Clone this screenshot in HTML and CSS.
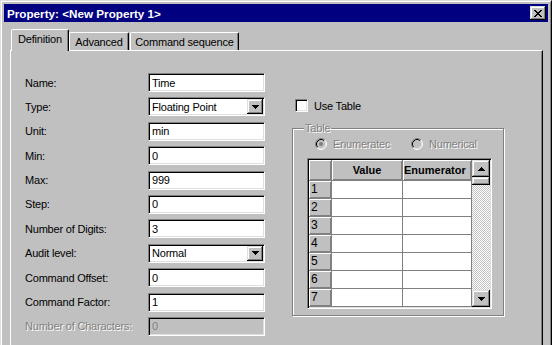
FILE: index.html
```html
<!DOCTYPE html>
<html lang="en">
<head>
    <meta charset="UTF-8">
    <title>Property: &lt;New Property 1&gt;</title>
    <link rel="stylesheet" href="styles.css">
</head>
<body>

<div class="window">
  <div class="frame">
    <div class="titlebar">
      <span class="title">Property: &lt;New Property 1&gt;</span>
      <span class="close-btn">
        <svg width="8" height="7" viewBox="0 0 8 7"><path d="M0 0h2v1H0zM6 0h2v1H6zM1 1h2v1H1zM5 1h2v1H5zM2 2h4v1H2zM3 3h2v1H3zM2 4h4v1H2zM1 5h2v1H1zM5 5h2v1H5zM0 6h2v1H0zM6 6h2v1H6z" fill="#000"/></svg>
      </span>
    </div>

    <div class="dialog-body">
      <div class="tabs">
        <div class="tab tab-def active">Definition</div>
        <div class="tab tab-adv">Advanced</div>
        <div class="tab tab-cmd">Command sequence</div>
      </div>

      <div class="panel">
        <div class="fields">
          <div class="field"><span class="field-label">Name:</span><div class="edit">Time</div></div>
          <div class="field"><span class="field-label">Type:</span>
            <div class="edit combo">Floating Point
              <span class="drop-btn"><svg width="7" height="4" viewBox="0 0 7 4"><path d="M0 0h7v1H0zM1 1h5v1H1zM2 2h3v1H2zM3 3h1v1H3z" fill="#000"/></svg></span>
            </div>
          </div>
          <div class="field"><span class="field-label">Unit:</span><div class="edit">min</div></div>
          <div class="field"><span class="field-label">Min:</span><div class="edit">0</div></div>
          <div class="field"><span class="field-label">Max:</span><div class="edit">999</div></div>
          <div class="field"><span class="field-label">Step:</span><div class="edit">0</div></div>
          <div class="field"><span class="field-label">Number of Digits:</span><div class="edit">3</div></div>
          <div class="field"><span class="field-label">Audit level:</span>
            <div class="edit combo">Normal
              <span class="drop-btn"><svg width="7" height="4" viewBox="0 0 7 4"><path d="M0 0h7v1H0zM1 1h5v1H1zM2 2h3v1H2zM3 3h1v1H3z" fill="#000"/></svg></span>
            </div>
          </div>
          <div class="field"><span class="field-label">Command Offset:</span><div class="edit">0</div></div>
          <div class="field"><span class="field-label">Command Factor:</span><div class="edit">1</div></div>
          <div class="field"><span class="field-label disabled">Number of Characters:</span><div class="edit edit-off">0</div></div>
        </div>

        <div class="table-side">
          <div class="check-row"><span class="checkbox"></span>Use Table</div>

          <div class="group">
            <span class="group-title disabled">Table</span>
            <div class="radios">
              <div class="radio disabled">
                <svg width="12" height="12" viewBox="0 0 12 12">
                  <circle cx="6" cy="6" r="5" fill="#c0c0c0"/>
                  <path d="M2.11 9.89A5.5 5.5 0 0 1 9.89 2.11" fill="none" stroke="#808080"/>
                  <path d="M9.89 2.11A5.5 5.5 0 0 1 2.11 9.89" fill="none" stroke="#fff"/>
                  <path d="M2.82 9.18A4.5 4.5 0 0 1 9.18 2.82" fill="none" stroke="#000"/>
                  <path d="M9.18 2.82A4.5 4.5 0 0 1 2.82 9.18" fill="none" stroke="#dfdfdf"/>
                  <circle cx="6" cy="6" r="2" fill="#808080"/>
                </svg>
                Enumeratec
              </div>
              <div class="radio disabled">
                <svg width="12" height="12" viewBox="0 0 12 12">
                  <circle cx="6" cy="6" r="5" fill="#c0c0c0"/>
                  <path d="M2.11 9.89A5.5 5.5 0 0 1 9.89 2.11" fill="none" stroke="#808080"/>
                  <path d="M9.89 2.11A5.5 5.5 0 0 1 2.11 9.89" fill="none" stroke="#fff"/>
                  <path d="M2.82 9.18A4.5 4.5 0 0 1 9.18 2.82" fill="none" stroke="#000"/>
                  <path d="M9.18 2.82A4.5 4.5 0 0 1 2.82 9.18" fill="none" stroke="#dfdfdf"/>
                </svg>
                Numerical
              </div>
            </div>

            <div class="grid-box">
              <div class="grid">
                <div class="cell hd"></div>
                <div class="cell hd col-hd">Value</div>
                <div class="cell hd col-hd col-left">Enumerator</div>

                <div class="cell hd row-hd">1</div><div class="cell"></div><div class="cell"></div>
                <div class="cell hd row-hd">2</div><div class="cell"></div><div class="cell"></div>
                <div class="cell hd row-hd">3</div><div class="cell"></div><div class="cell"></div>
                <div class="cell hd row-hd">4</div><div class="cell"></div><div class="cell"></div>
                <div class="cell hd row-hd">5</div><div class="cell"></div><div class="cell"></div>
                <div class="cell hd row-hd">6</div><div class="cell"></div><div class="cell"></div>
                <div class="cell hd row-hd">7</div><div class="cell"></div><div class="cell"></div>
              </div>
              <div class="scrollbar">
                <span class="sb-btn"><svg width="7" height="4" viewBox="0 0 7 4"><path d="M3 0h1v1H3zM2 1h3v1H2zM1 2h5v1H1zM0 3h7v1H0z" fill="#000"/></svg></span>
                <span class="sb-thumb"></span>
                <span class="sb-track"></span>
                <span class="sb-btn"><svg width="7" height="4" viewBox="0 0 7 4"><path d="M0 0h7v1H0zM1 1h5v1H1zM2 2h3v1H2zM3 3h1v1H3z" fill="#000"/></svg></span>
              </div>
            </div>
          </div>
        </div>
      </div>
    </div>
  </div>
</div>

</body>
</html>
```

FILE: styles.css
```css
html, body {
    margin: 0;
    height: 345px;
    overflow: hidden;
}

body {
    background-color: #c0c0c0;
    font-family: "Liberation Sans", Arial, sans-serif;
    font-size: 11px;
    letter-spacing: -0.2px;
    color: #000;
}

svg {
    display: block;
}

/* window frame */
.window {
    width: 552px;
    height: 352px;
    box-sizing: border-box;
    border: 1px solid;
    border-color: #dfdfdf #000 #000 #dfdfdf;
}

.frame {
    height: 100%;
    box-sizing: border-box;
    border: 1px solid;
    border-color: #fff #808080 #808080 #fff;
    padding: 2px;
}

.titlebar {
    height: 18px;
    background-color: #000080;
    color: #fff;
    display: flex;
    align-items: center;
    justify-content: space-between;
    padding: 0 2px 0 3px;
}

.title {
    font-weight: bold;
    font-size: 11.7px;
    letter-spacing: 0;
}

.close-btn,
.drop-btn,
.sb-btn,
.sb-thumb {
    background-color: #c0c0c0;
    box-shadow: inset -1px -1px #000, inset 1px 1px #dfdfdf, inset -2px -2px #808080, inset 2px 2px #fff;
}

.close-btn {
    width: 16px;
    height: 14px;
    display: flex;
    align-items: center;
    justify-content: center;
    padding-right: 1px;
    box-sizing: border-box;
}

/* tabs */
.dialog-body {
    padding: 7px 5px 0 6px;
}

.tabs {
    display: flex;
    align-items: flex-end;
    height: 21px;
    padding-left: 1px;
}

.tab {
    height: 18px;
    box-sizing: border-box;
    border: 1px solid;
    border-bottom: 0;
    border-color: #fff #000 transparent #fff;
    box-shadow: inset -1px 0 #808080;
    border-radius: 2px 2px 0 0;
    padding-top: 3px;
    line-height: 13px;
    text-align: center;
}

.tab.active {
    height: 22px;
    margin-bottom: -1px;
    background-color: #c0c0c0;
    position: relative;
    z-index: 1;
}

.tab-def { width: 58px; }
.tab-adv { width: 60px; }
.tab-cmd { width: 109px; margin-left: 1px; }

.panel {
    height: 300px;
    box-sizing: border-box;
    border: 1px solid;
    border-bottom: 0;
    border-color: #fff #000 transparent #fff;
    box-shadow: inset -1px 0 #808080;
    display: flex;
    align-items: flex-start;
    padding: 22px 0 0 14px;
}

/* left column */
.fields {
    display: flex;
    flex-direction: column;
    gap: 5.4px;
}

.field {
    display: flex;
    align-items: center;
}

.field-label {
    width: 123px;
}

.disabled {
    color: #808080;
    text-shadow: 1px 1px #fff;
}

.edit,
.checkbox {
    box-sizing: border-box;
    border: 1px solid;
    border-color: #808080 #fff #fff #808080;
    box-shadow: inset 1px 1px #000, inset -1px -1px #dfdfdf;
    background-color: #fff;
}

.edit {
    width: 117px;
    height: 19px;
    display: flex;
    align-items: center;
    padding-left: 3px;
}

.edit.combo {
    padding-right: 1px;
}

.edit-off {
    background-color: #c0c0c0;
    color: #808080;
}

.drop-btn {
    margin-left: auto;
    width: 16px;
    height: 15px;
    display: flex;
    align-items: center;
    justify-content: center;
}

/* right column */
.table-side {
    margin: 26px 0 0 27px;
}

.check-row {
    display: flex;
    align-items: center;
    gap: 6px;
    padding-left: 3px;
    height: 13px;
}

.checkbox {
    width: 13px;
    height: 13px;
}

.group {
    position: relative;
    margin-top: 16px;
    width: 212px;
    height: 188px;
    box-sizing: border-box;
    border: 1px solid #808080;
    box-shadow: inset 1px 1px #fff, 1px 1px #fff;
    padding-top: 9px;
}

.group-title {
    position: absolute;
    top: -7px;
    left: 11px;
    padding: 0 1px;
    line-height: 13px;
    background-color: #c0c0c0;
}

.radios {
    display: flex;
    align-items: center;
    height: 12px;
    padding-left: 22px;
}

.radio {
    display: flex;
    align-items: center;
    gap: 6px;
}

.radio:first-child {
    width: 96px;
}

.grid-box {
    display: flex;
    width: 185px;
    height: 151px;
    box-sizing: border-box;
    border: 1px solid;
    border-color: #808080 #fff #fff #808080;
    box-shadow: inset 1px 1px #000, inset -1px -1px #dfdfdf;
    padding: 1px;
    margin: 8px 0 0 14px;
}

.grid {
    display: grid;
    grid-template-columns: 23px 71px 69px;
    grid-template-rows: 21px repeat(7, 18px);
    background-color: #fff;
}

.cell {
    box-sizing: border-box;
    border-right: 1px solid #808080;
    border-bottom: 1px solid #808080;
    overflow: hidden;
    white-space: nowrap;
}

.cell.hd {
    background-color: #c0c0c0;
    box-shadow: inset 1px 1px #fff, inset -1px -1px #808080;
}

.col-hd {
    font-weight: bold;
    text-align: center;
    line-height: 20px;
    letter-spacing: 0;
}

.col-left {
    text-align: left;
    padding-left: 1px;
}

.row-hd {
    font-size: 12px;
    line-height: 17px;
    padding-left: 2px;
}

.scrollbar {
    width: 18px;
    display: flex;
    flex-direction: column;
    background: repeating-conic-gradient(#fff 0 25%, #c0c0c0 0 50%) 0 0 / 2px 2px;
}

.sb-btn {
    height: 17px;
    flex: none;
    display: flex;
    align-items: center;
    justify-content: center;
}

.sb-thumb {
    height: 8px;
    flex: none;
}

.sb-track {
    flex: 1;
}
```
